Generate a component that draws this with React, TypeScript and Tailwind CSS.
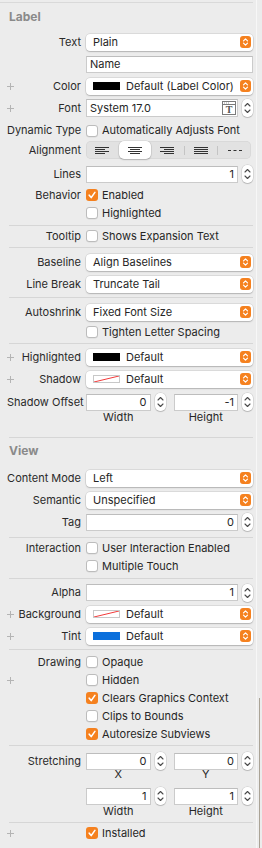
import React from 'react';

const font = { fontFamily: 'Inter, "Noto Sans", sans-serif' };

function PlusIcon() {
  return (
    <svg width="7" height="7" viewBox="0 0 7 7">
      <path d="M3.5 0V7M0 3.5H7" stroke="#b4b4b4" strokeWidth="1" />
    </svg>
  );
}

function OrangeArrows() {
  return (
    <div className="flex h-[12px] w-[11px] shrink-0 items-center justify-center rounded-[3px] bg-[#f5811f]">
      <svg width="7" height="10" viewBox="0 0 7 10">
        <path d="M1.5 3.8L3.5 1.8L5.5 3.8M1.5 6.2L3.5 8.2L5.5 6.2" stroke="#fff" strokeWidth="1.2" fill="none" strokeLinecap="round" strokeLinejoin="round" />
      </svg>
    </div>
  );
}

function Stepper() {
  return (
    <div className="flex h-[18px] w-[11px] shrink-0 items-center justify-center rounded-[5px] bg-white shadow-[0_0_0_0.5px_rgba(0,0,0,0.15),0_1px_1px_rgba(0,0,0,0.15)]">
      <svg width="7" height="14" viewBox="0 0 7 14">
        <path d="M1 5L3.5 2.5L6 5M1 9L3.5 11.5L6 9" stroke="#4a4a4a" strokeWidth="1.1" fill="none" strokeLinecap="round" strokeLinejoin="round" />
      </svg>
    </div>
  );
}

function Row({ label, plus, className = 'h-[22px]', children }: { label?: string; plus?: boolean; className?: string; children?: React.ReactNode }) {
  return (
    <div className={`flex items-center ${className}`}>
      <div className="flex w-[81px] shrink-0 items-center">
        <span className="ml-[7px] flex w-[7px] items-center">{plus && <PlusIcon />}</span>
        <span className="ml-auto whitespace-nowrap text-[11px] text-[#2a2a2a]">{label}</span>
      </div>
      <div className="ml-[5px] flex min-w-0 flex-1 items-center">{children}</div>
    </div>
  );
}

function Popup({ children }: { children: React.ReactNode }) {
  return (
    <div className="flex h-[17px] flex-1 items-center rounded-[4px] bg-white pl-[7px] pr-[2px] shadow-[0_0_0_0.5px_rgba(0,0,0,0.14),0_1px_1.5px_rgba(0,0,0,0.18)]">
      <div className="flex min-w-0 flex-1 items-center whitespace-nowrap text-[11px] text-[#262626]">{children}</div>
      <OrangeArrows />
    </div>
  );
}

function Field({ value, right, className = '' }: { value: string; right?: boolean; className?: string }) {
  return (
    <div className={`flex h-[17px] min-w-0 flex-1 items-center border border-[#cbcbcb] border-t-[#bdbdbd] bg-white px-[3px] text-[11px] text-[#262626] ${right ? 'justify-end' : ''} ${className}`}>
      {value}
    </div>
  );
}

function NumField({ value }: { value: string }) {
  return (
    <div className="flex flex-1 items-center gap-[4px]">
      <Field value={value} right />
      <Stepper />
    </div>
  );
}

function Box({ checked }: { checked?: boolean }) {
  if (checked)
    return (
      <div className="flex h-[12px] w-[12px] shrink-0 items-center justify-center rounded-[3px] bg-[#f5811f]">
        <svg width="10" height="10" viewBox="0 0 10 10">
          <path d="M2.2 5.2L4.2 7.6L7.9 2.4" stroke="#fff" strokeWidth="1.6" fill="none" strokeLinecap="round" strokeLinejoin="round" />
        </svg>
      </div>
    );
  return <div className="h-[12px] w-[12px] shrink-0 rounded-[3px] border border-[#bcbcbc] bg-white shadow-[0_0.5px_0.5px_rgba(0,0,0,0.08)]" />;
}

function CheckRow({ label, text, checked, plus, className = 'h-[18px]' }: { label?: string; text: string; checked?: boolean; plus?: boolean; className?: string }) {
  return (
    <Row label={label} plus={plus} className={className}>
      <Box checked={checked} />
      <span className="ml-[4px] whitespace-nowrap text-[11px] text-[#262626]">{text}</span>
    </Row>
  );
}

function Swatch({ color }: { color: string }) {
  return <div className={`mr-[6px] h-[8px] w-[27px] shrink-0 ${color}`} />;
}

function NoColor() {
  return (
    <div className="mr-[6px] h-[8px] w-[27px] shrink-0 border border-[#c8c8c8] bg-white">
      <svg width="25" height="6" viewBox="0 0 25 6" className="block">
        <path d="M0 6L25 0" stroke="#f23b3b" strokeWidth="1" />
      </svg>
    </div>
  );
}

function FontIcon() {
  return (
    <svg width="14" height="14" viewBox="0 0 14 14" className="shrink-0">
      <rect x="0.5" y="0.5" width="13" height="13" fill="#fff" stroke="#7a7a7a" />
      <path d="M0.5 3.5H13.5" stroke="#7a7a7a" />
      <path d="M2 2H3M4 2H5M6 2H7" stroke="#9a9a9a" />
      <text x="7" y="12.3" textAnchor="middle" fontSize="10" fontWeight="bold" fontFamily='"Liberation Serif", serif' fill="#555">T</text>
    </svg>
  );
}

function AlignIcon({ kind }: { kind: number }) {
  const paths = [
    'M0 0.5H14M0 2.5H10M0 4.5H14M0 6.5H10',
    'M0 0.5H14M2 2.5H12M0 4.5H14M2 6.5H12',
    'M0 0.5H14M4 2.5H14M0 4.5H14M4 6.5H14',
    'M0 0.5H14M0 2.5H14M0 4.5H14M0 6.5H14',
    'M0 3.5H3M5.5 3.5H8.5M11 3.5H14',
  ];
  return (
    <svg width="14" height="7" viewBox="0 0 14 7">
      <path d={paths[kind]} stroke="#333" strokeWidth="1" />
    </svg>
  );
}

function Segmented() {
  return (
    <div className="flex h-[18px] w-[165px] items-center rounded-[5px] bg-[#e2e2e2] shadow-[inset_0_0_0_0.5px_rgba(0,0,0,0.08)]">
      {[0, 1, 2, 3, 4].map((i) => (
        <React.Fragment key={i}>
          {(i === 3 || i === 4) && <div className="h-[9px] w-px bg-[#c4c4c4]" />}
          <div
            className={`flex h-[18px] flex-1 items-center justify-center ${i === 1 ? 'rounded-[5px] bg-white shadow-[0_0_0_0.5px_rgba(0,0,0,0.12),0_1px_1.5px_rgba(0,0,0,0.2)]' : ''}`}
          >
            <AlignIcon kind={i} />
          </div>
        </React.Fragment>
      ))}
    </div>
  );
}

function Sep({ className }: { className: string }) {
  return <div className={`ml-[9px] h-px bg-[#d6d6d6] ${className}`} />;
}

function Header({ title, className }: { title: string; className: string }) {
  return (
    <div className={`flex items-center pl-[9px] text-[12px] font-bold text-[#8a8a8a] ${className}`}>{title}</div>
  );
}

function SubLabels({ a, b, className }: { a: string; b: string; className: string }) {
  return (
    <Row className={className}>
      <div className="grid flex-1 grid-cols-2 gap-[8px] text-[11px] text-[#262626]">
        <div className="flex justify-center pr-[15px]">{a}</div>
        <div className="flex justify-center pr-[15px]">{b}</div>
      </div>
    </Row>
  );
}

function PairRow({ label, a, b, className }: { label?: string; a: string; b: string; className: string }) {
  return (
    <Row label={label} className={className}>
      <div className="grid flex-1 grid-cols-2 gap-[8px]">
        <NumField value={a} />
        <NumField value={b} />
      </div>
    </Row>
  );
}

export default function App() {
  return (
    <div className="flex h-[848px] w-[262px] bg-[#ececec]" style={font}>
      <div className="flex w-[256px] flex-col pr-[3px]">
        <div className="h-[3px] border-b border-[#d9d9d9]" />
        <Header title="Label" className="h-[28px]" />
        <Row label="Text"><Popup>Plain</Popup></Row>
        <Row><Field value="Name" /></Row>
        <Row label="Color" plus><Popup><Swatch color="bg-black" />Default (Label Color)</Popup></Row>
        <Row label="Font" plus>
          <div className="flex flex-1 items-center gap-[4px]">
            <div className="flex h-[18px] min-w-0 flex-1 items-center justify-between border border-[#cbcbcb] border-t-[#bdbdbd] bg-white pl-[3px] pr-[1px] text-[11px] text-[#262626]">
              System 17.0
              <FontIcon />
            </div>
            <Stepper />
          </div>
        </Row>
        <CheckRow label="Dynamic Type" text="Automatically Adjusts Font" className="mt-[1px] h-[21px]" />
        <Row label="Alignment" className="h-[18px]"><Segmented /></Row>
        <Row label="Lines" className="mt-[4px] h-[22px]"><NumField value="1" /></Row>
        <CheckRow label="Behavior" text="Enabled" checked className="mt-[1px] h-[18px]" />
        <CheckRow text="Highlighted" />
        <Sep className="mt-[3px]" />
        <CheckRow label="Tooltip" text="Shows Expansion Text" className="mt-[1px] h-[18px]" />
        <Sep className="mt-[2px]" />
        <Row label="Baseline" className="mt-[3px] h-[22px]"><Popup>Align Baselines</Popup></Row>
        <Row label="Line Break"><Popup>Truncate Tail</Popup></Row>
        <Sep className="mt-[2px]" />
        <Row label="Autoshrink" className="mt-[3px] h-[22px]"><Popup>Fixed Font Size</Popup></Row>
        <CheckRow text="Tighten Letter Spacing" />
        <Sep className="mt-[2px]" />
        <Row label="Highlighted" plus className="mt-[2px] h-[22px]"><Popup><Swatch color="bg-black" />Default</Popup></Row>
        <Row label="Shadow" plus><Popup><NoColor />Default</Popup></Row>
        <PairRow label="Shadow Offset" a="0" b="-1" className="mt-[1px] h-[22px]" />
        <SubLabels a="Width" b="Height" className="h-[8px]" />
        <Sep className="mt-[16px]" />
        <Header title="View" className="h-[26px]" />
        <Row label="Content Mode" className="mt-[3px] h-[22px]"><Popup>Left</Popup></Row>
        <Row label="Semantic"><Popup>Unspecified</Popup></Row>
        <Row label="Tag"><NumField value="0" /></Row>
        <Sep className="mt-[4px]" />
        <CheckRow label="Interaction" text="User Interaction Enabled" className="mt-[1px] h-[18px]" />
        <CheckRow text="Multiple Touch" />
        <Sep className="mt-[3px]" />
        <Row label="Alpha" className="mt-[3px] h-[21px]"><NumField value="1" /></Row>
        <Row label="Background" plus><Popup><NoColor />Default</Popup></Row>
        <Row label="Tint" plus><Popup><Swatch color="bg-[#0a6fdc]" />Default</Popup></Row>
        <Sep className="mt-[2px]" />
        <CheckRow label="Drawing" text="Opaque" className="mt-[3px] h-[18px]" />
        <CheckRow plus text="Hidden" />
        <CheckRow text="Clears Graphics Context" checked />
        <CheckRow text="Clips to Bounds" />
        <CheckRow text="Autoresize Subviews" checked />
        <Sep className="mt-[2px]" />
        <PairRow label="Stretching" a="0" b="0" className="mt-[5px] h-[20px]" />
        <SubLabels a="X" b="Y" className="h-[6px]" />
        <PairRow a="1" b="1" className="mt-[9px] h-[20px]" />
        <SubLabels a="Width" b="Height" className="h-[10px]" />
        <Sep className="mt-[6px]" />
        <CheckRow plus text="Installed" checked className="mt-[1px] h-[18px]" />
      </div>
      <div className="w-px bg-[#f7f7f7]" />
      <div className="w-[2px]" />
      <div className="flex w-px flex-col">
        <div className="flex-1" />
        <div className="h-[150px] bg-[#aaa396]" />
      </div>
    </div>
  );
}
